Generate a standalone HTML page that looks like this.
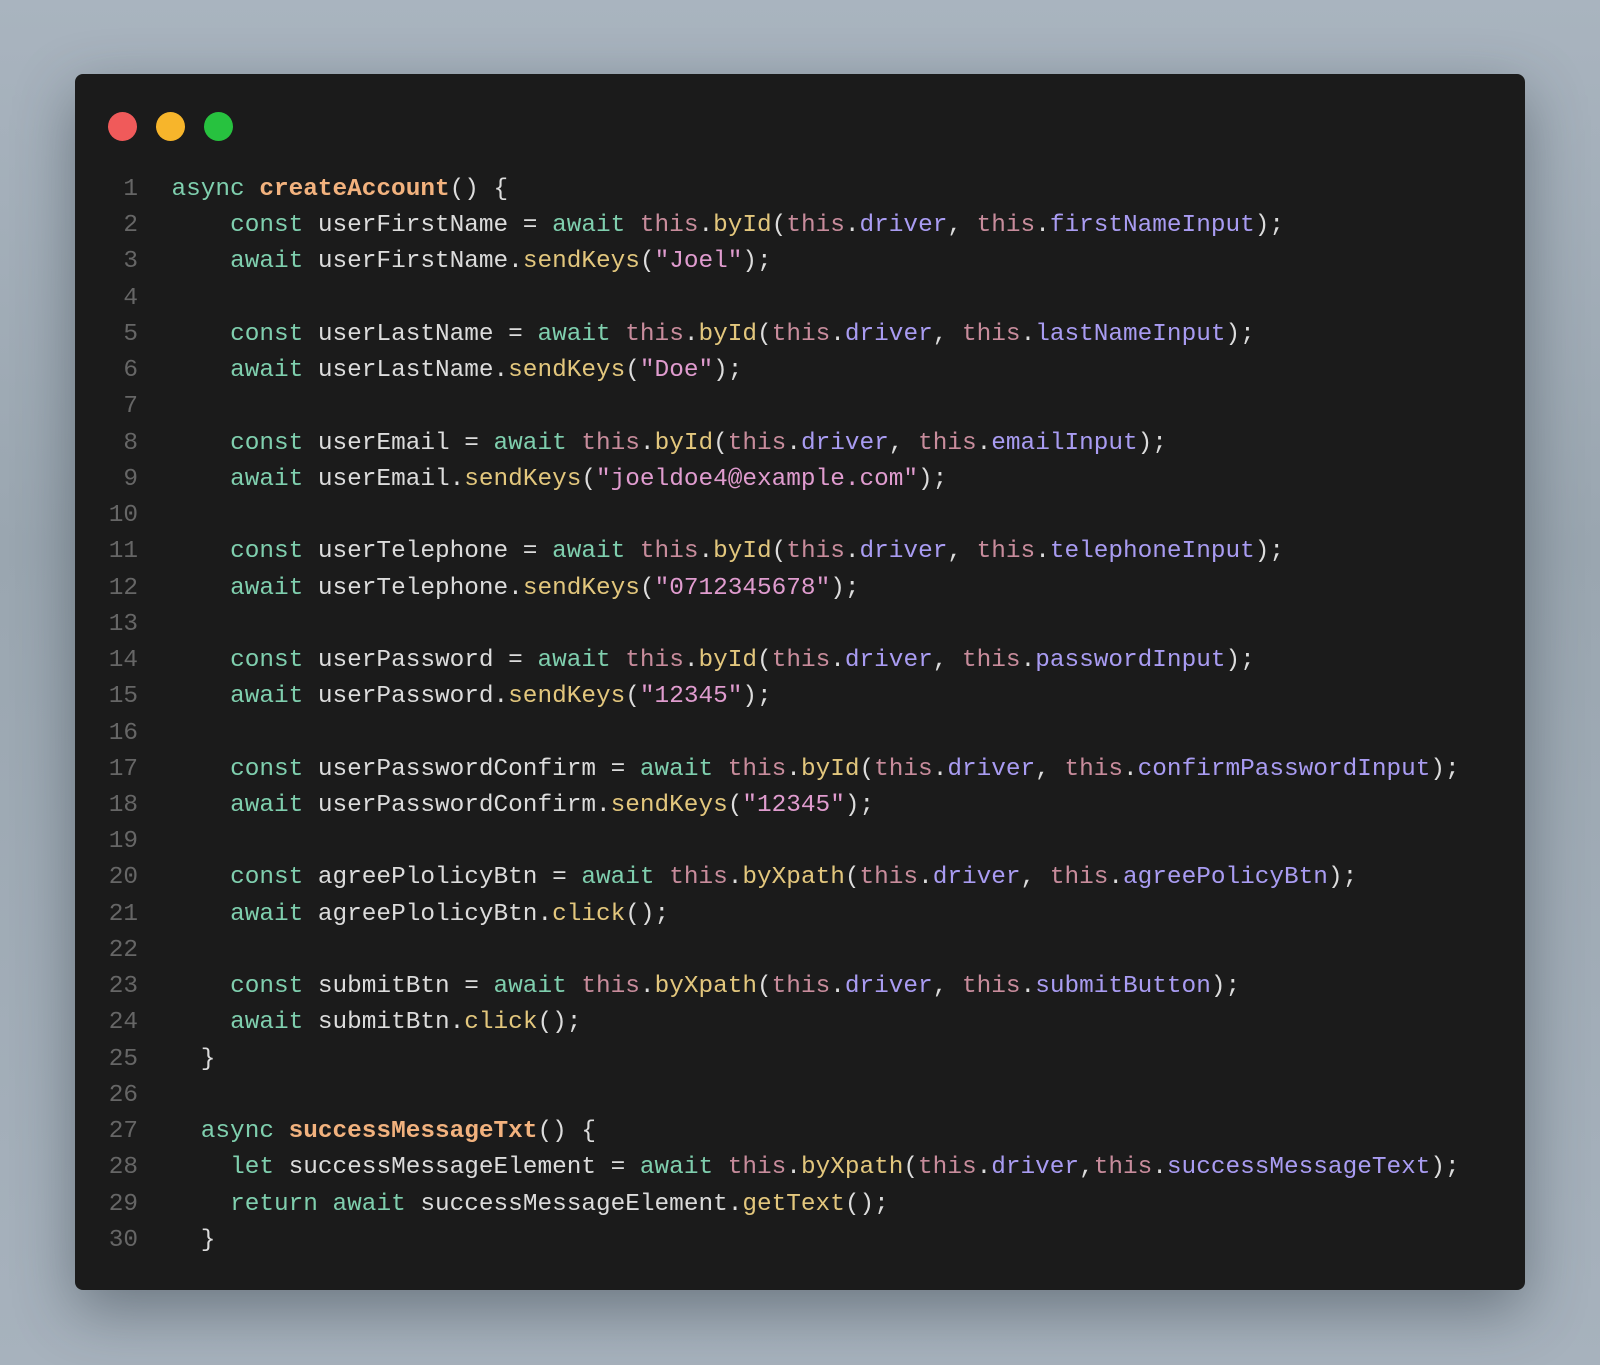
<!DOCTYPE html>
<html><head><meta charset="utf-8"><style>
html,body{margin:0;padding:0;}
body{width:1600px;height:1365px;background:linear-gradient(180deg,#a9b4bf 0%,#9aa6b0 40%,#a7b2bd 100%);position:relative;overflow:hidden;}
.win{position:absolute;left:75px;top:74px;width:1450px;height:1216px;background:#1b1b1b;border-radius:8px;box-shadow:0 20px 60px rgba(40,50,60,.45);}
.dot{position:absolute;top:112px;width:29px;height:29px;border-radius:50%;}
.code{position:absolute;left:0;top:172px;font-family:"Liberation Mono",monospace;font-size:24.4px;line-height:36.24px;color:#dcdcdc;white-space:pre;}
.ln{position:absolute;left:90px;top:0;width:48px;text-align:right;color:#666;}
.tx{position:absolute;left:171.5px;top:0;}
.k{color:#7fcfae}.f{color:#f2b27e;font-weight:bold}.m{color:#e3c77d}.t{color:#c88c9c}.p{color:#a99cf2}.s{color:#e09ccf}
</style></head><body>
<div class="win"></div>
<div class="dot" style="left:108px;background:#f05a5a"></div>
<div class="dot" style="left:156px;background:#f7b52b"></div>
<div class="dot" style="left:204px;background:#27c23f"></div>
<div class="code"><div class="ln">1
2
3
4
5
6
7
8
9
10
11
12
13
14
15
16
17
18
19
20
21
22
23
24
25
26
27
28
29
30</div><div class="tx"><span class="k">async</span> <span class="f">createAccount</span>() {
    <span class="k">const</span> userFirstName = <span class="k">await</span> <span class="t">this</span>.<span class="m">byId</span>(<span class="t">this</span>.<span class="p">driver</span>, <span class="t">this</span>.<span class="p">firstNameInput</span>);
    <span class="k">await</span> userFirstName.<span class="m">sendKeys</span>(<span class="s">"Joel"</span>);

    <span class="k">const</span> userLastName = <span class="k">await</span> <span class="t">this</span>.<span class="m">byId</span>(<span class="t">this</span>.<span class="p">driver</span>, <span class="t">this</span>.<span class="p">lastNameInput</span>);
    <span class="k">await</span> userLastName.<span class="m">sendKeys</span>(<span class="s">"Doe"</span>);

    <span class="k">const</span> userEmail = <span class="k">await</span> <span class="t">this</span>.<span class="m">byId</span>(<span class="t">this</span>.<span class="p">driver</span>, <span class="t">this</span>.<span class="p">emailInput</span>);
    <span class="k">await</span> userEmail.<span class="m">sendKeys</span>(<span class="s">"joeldoe4@example.com"</span>);

    <span class="k">const</span> userTelephone = <span class="k">await</span> <span class="t">this</span>.<span class="m">byId</span>(<span class="t">this</span>.<span class="p">driver</span>, <span class="t">this</span>.<span class="p">telephoneInput</span>);
    <span class="k">await</span> userTelephone.<span class="m">sendKeys</span>(<span class="s">"0712345678"</span>);

    <span class="k">const</span> userPassword = <span class="k">await</span> <span class="t">this</span>.<span class="m">byId</span>(<span class="t">this</span>.<span class="p">driver</span>, <span class="t">this</span>.<span class="p">passwordInput</span>);
    <span class="k">await</span> userPassword.<span class="m">sendKeys</span>(<span class="s">"12345"</span>);

    <span class="k">const</span> userPasswordConfirm = <span class="k">await</span> <span class="t">this</span>.<span class="m">byId</span>(<span class="t">this</span>.<span class="p">driver</span>, <span class="t">this</span>.<span class="p">confirmPasswordInput</span>);
    <span class="k">await</span> userPasswordConfirm.<span class="m">sendKeys</span>(<span class="s">"12345"</span>);

    <span class="k">const</span> agreePlolicyBtn = <span class="k">await</span> <span class="t">this</span>.<span class="m">byXpath</span>(<span class="t">this</span>.<span class="p">driver</span>, <span class="t">this</span>.<span class="p">agreePolicyBtn</span>);
    <span class="k">await</span> agreePlolicyBtn.<span class="m">click</span>();

    <span class="k">const</span> submitBtn = <span class="k">await</span> <span class="t">this</span>.<span class="m">byXpath</span>(<span class="t">this</span>.<span class="p">driver</span>, <span class="t">this</span>.<span class="p">submitButton</span>);
    <span class="k">await</span> submitBtn.<span class="m">click</span>();
  }

  <span class="k">async</span> <span class="f">successMessageTxt</span>() {
    <span class="k">let</span> successMessageElement = <span class="k">await</span> <span class="t">this</span>.<span class="m">byXpath</span>(<span class="t">this</span>.<span class="p">driver</span>,<span class="t">this</span>.<span class="p">successMessageText</span>);
    <span class="k">return</span> <span class="k">await</span> successMessageElement.<span class="m">getText</span>();
  }</div></div>
</body></html>
